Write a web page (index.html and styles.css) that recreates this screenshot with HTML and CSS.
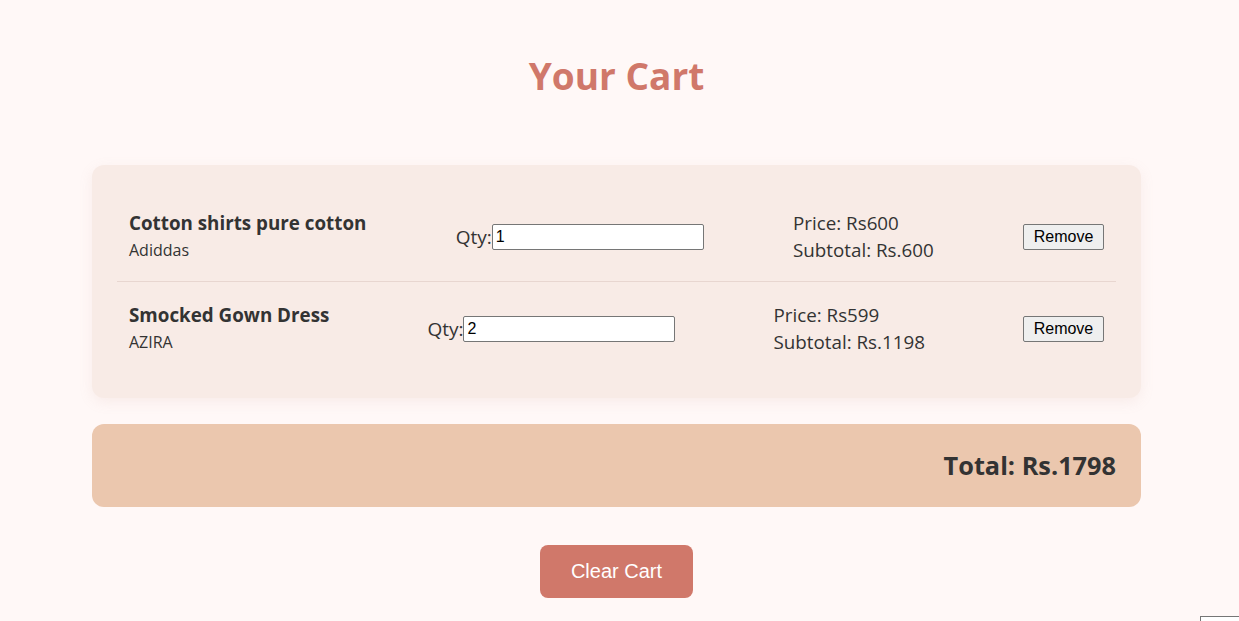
FILE: index.html
```html
<!DOCTYPE html>
<html lang="en">
<head>
<meta charset="utf-8">
<title>Your Cart</title>
<link rel="stylesheet" href="styles.css">
</head>
<body>
<div class="page">
  <h1 class="title">Your Cart</h1>
  <div class="cart">
    <div class="item">
      <div class="info">
        <div class="name">Cotton shirts pure cotton</div>
        <div class="brand">Adiddas</div>
      </div>
      <div class="qty">
        <label class="qty-label">Qty:</label><input class="qty-input" type="number" value="1">
      </div>
      <div class="prices">
        <div>Price: Rs600</div>
        <div>Subtotal: Rs.600</div>
      </div>
      <button class="remove">Remove</button>
    </div>
    <div class="item">
      <div class="info">
        <div class="name">Smocked Gown Dress</div>
        <div class="brand">AZIRA</div>
      </div>
      <div class="qty">
        <label class="qty-label">Qty:</label><input class="qty-input" type="number" value="2">
      </div>
      <div class="prices">
        <div>Price: Rs599</div>
        <div>Subtotal: Rs.1198</div>
      </div>
      <button class="remove">Remove</button>
    </div>
  </div>
  <div class="total">Total: Rs.1798</div>
  <div class="actions">
    <button class="clear">Clear Cart</button>
  </div>
</div>
<div class="corner"></div>
</body>
</html>
```
FILE: styles.css
```css
html, body {
  margin: 0;
  padding: 0;
}
body {
  background: #fff8f7;
  font-family: "Segoe UI", "Open Sans", sans-serif;
  color: #333;
  overflow: hidden;
  height: 621px;
  position: relative;
}
.page {
  width: 1049px;
  margin-left: 92px;
}
.title {
  margin: 49px 0 62px;
  text-align: center;
  font-size: 37px;
  line-height: 54px;
  font-weight: 700;
  color: #d0786a;
}
.cart {
  background: #f8ebe6;
  border-radius: 12px;
  padding: 25px;
  box-shadow: 0 4px 14px rgba(200, 150, 140, 0.12);
}
.item {
  display: flex;
  justify-content: space-between;
  align-items: center;
  padding: 20px 12px 17px;
}
.item + .item {
  border-top: 1px solid #e8d6d0;
}
.name {
  font-size: 18.8px;
  font-weight: 700;
  line-height: 27px;
}
.brand {
  font-size: 16px;
  line-height: 27px;
}
.qty {
  display: flex;
  align-items: center;
}
.qty-label {
  font-size: 19px;
  line-height: 26px;
}
.qty-input {
  width: 212px;
  height: 26px;
  box-sizing: border-box;
  border: 1px solid #767676;
  border-radius: 2px;
  padding: 2px 3px;
  font-family: "Liberation Sans", Arial, sans-serif;
  font-size: 16px;
  color: #000;
  background: #fff;
  margin: 0;
}
.prices {
  font-size: 18.8px;
  line-height: 27px;
}
.remove {
  width: 81px;
  height: 26px;
  border: 1px solid #767676;
  border-radius: 2px;
  background: #efefef;
  font-family: "Liberation Sans", Arial, sans-serif;
  font-size: 16px;
  color: #000;
  padding: 0;
}
.total {
  margin-top: 26px;
  background: #ebc7ae;
  border-radius: 12px;
  padding: 24px 25px;
  text-align: right;
  font-size: 25.3px;
  line-height: 35px;
  font-weight: 700;
  color: #333;
}
.actions {
  display: flex;
  justify-content: center;
  margin-top: 38px;
}
.clear {
  width: 153px;
  height: 53px;
  border: none;
  border-radius: 8px;
  background: #d0786a;
  color: #fff;
  font-family: "Liberation Sans", Arial, sans-serif;
  font-size: 20px;
  padding: 0;
}
.corner {
  position: absolute;
  left: 1200px;
  top: 616px;
  width: 60px;
  height: 20px;
  border: 1px solid #767676;
  background: #fff;
}
```
